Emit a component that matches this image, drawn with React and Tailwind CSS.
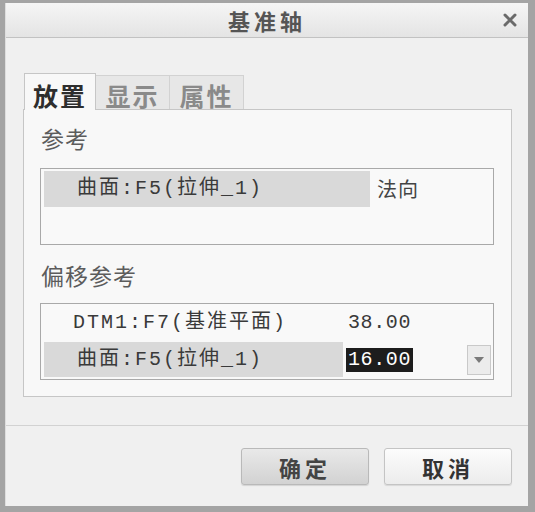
const cjk = "font-['Noto_Sans_CJK_SC',sans-serif]";
const mono = "font-['Liberation_Mono','Noto_Sans_CJK_SC',monospace]";

function Tab({ label, active }) {
  if (active) {
    return (
      <div className="relative z-10 -mb-px flex h-[37px] w-[72px] items-end justify-center border border-b-0 border-[#c6c6c6] bg-[#f8f8f8] pb-[2px]">
        <span className={`${cjk} text-[25px] font-bold leading-none tracking-[2px] text-[#2e2e2e]`}>{label}</span>
      </div>
    );
  }
  return (
    <div className="flex h-[34px] w-[74px] items-end justify-center border border-l-0 border-b-0 border-[#d2d2d2] bg-[#e7e7e7] pb-[1px]">
      <span className={`${cjk} text-[25px] font-bold leading-none tracking-[2px] text-[#8a8a8a]`}>{label}</span>
    </div>
  );
}

function SectionLabel({ children, className = '' }) {
  return (
    <div className={`h-[30px] pl-[1px] ${cjk} text-[23px] leading-[30px] tracking-[1px] text-[#5c5c5c] ${className}`}>
      {children}
    </div>
  );
}

export default function App() {
  return (
    <div className="h-[512px] w-[535px] bg-[#a4a4a4] pb-[6px] pl-[5px] pr-[7px] pt-[3px]">
      <div className="flex h-full flex-col border-l border-[#dedede] bg-[#f0f0f0]">
        {/* title bar */}
        <div className="grid h-[35px] shrink-0 grid-cols-[1fr_auto_1fr] items-center border-b border-[#c2c2c2] bg-gradient-to-b from-[#f5f5f5] to-[#e4e4e4]">
          <div />
          <span className={`${cjk} text-[22px] font-bold leading-none tracking-[4px] text-[#555]`}>基准轴</span>
          <div className="flex justify-end pr-[11px]">
            <svg width="14" height="14" viewBox="0 0 14 14">
              <path d="M2 2L12 12M12 2L2 12" stroke="#6a6a6a" strokeWidth="3" strokeLinecap="round" />
            </svg>
          </div>
        </div>

        {/* body */}
        <div className="h-[387px] shrink-0 pb-[28px] pl-[17px] pr-[16px] pt-[35px]">
          <div className="flex h-[36px] items-end pl-[1px]">
            <Tab label="放置" active />
            <Tab label="显示" />
            <Tab label="属性" />
          </div>
          <div className="border border-[#c6c6c6] bg-[#f8f8f8] pb-[16px] pl-[16px] pr-[17px] pt-[13px]">
            <SectionLabel>参考</SectionLabel>
            <div className="mt-[15px] h-[77px] border border-[#a9a9a9] bg-[#f9f9f9] pl-[3px] pt-[2px]">
              <div className="flex h-[36px] items-center">
                <div className={`flex h-full w-[326px] items-center bg-[#d9d9d9] pl-[33px] ${mono} text-[20px] leading-none tracking-[2px] text-[#3a3a3a]`}>
                  曲面:F5(拉伸_1)
                </div>
                <span className={`ml-[7px] ${cjk} text-[20px] leading-none tracking-[1px] text-[#444]`}>法向</span>
              </div>
            </div>

            <SectionLabel className="mt-[15px]">偏移参考</SectionLabel>
            <div className="mt-[13px] h-[77px] border border-[#a9a9a9] bg-[#f9f9f9] pl-[3px]">
              <div className="flex h-[38px] items-center">
                <div className={`w-[299px] pl-[29px] ${mono} text-[20px] leading-none tracking-[2px] text-[#3a3a3a]`}>
                  DTM1:F7(基准平面)
                </div>
                <span className={`ml-[5px] ${mono} text-[20px] leading-none tracking-[0.6px] text-[#3a3a3a]`}>38.00</span>
              </div>
              <div className="flex h-[35px] items-center pr-[2px]">
                <div className={`flex h-full w-[299px] items-center bg-[#d9d9d9] pl-[33px] ${mono} text-[20px] leading-none tracking-[2px] text-[#3a3a3a]`}>
                  曲面:F5(拉伸_1)
                </div>
                <div className={`ml-[3px] flex h-[24px] w-[67px] items-center justify-center bg-[#1d1d1d] ${mono} text-[20px] leading-none tracking-[0.6px] text-white`}>
                  16.00
                </div>
                <div className="ml-auto flex h-[30px] w-[24px] items-center justify-center border border-[#c9c9c9] bg-[#ececec]">
                  <svg width="10" height="6" viewBox="0 0 10 6">
                    <path d="M0 0H10L5 6Z" fill="#7a7a7a" />
                  </svg>
                </div>
              </div>
            </div>
          </div>
        </div>

        {/* footer */}
        <div className="flex flex-1 items-start justify-end gap-[15px] border-t border-[#d2d2d2] pr-[16px] pt-[22px]">
          <button className={`h-[37px] w-[128px] rounded-[3px] border border-[#b9b9b9] bg-gradient-to-b from-[#e9e9e9] to-[#d2d2d2] shadow-[0_1px_1px_rgba(0,0,0,0.12)] ${cjk} text-[22px] font-bold leading-none tracking-[4px] text-[#444]`}>
            确定
          </button>
          <button className={`h-[37px] w-[128px] rounded-[3px] border border-[#c4c4c4] bg-gradient-to-b from-[#fcfcfc] to-[#ececec] shadow-[0_1px_1px_rgba(0,0,0,0.1)] ${cjk} text-[22px] font-bold leading-none tracking-[4px] text-[#333]`}>
            取消
          </button>
        </div>
      </div>
    </div>
  );
}
